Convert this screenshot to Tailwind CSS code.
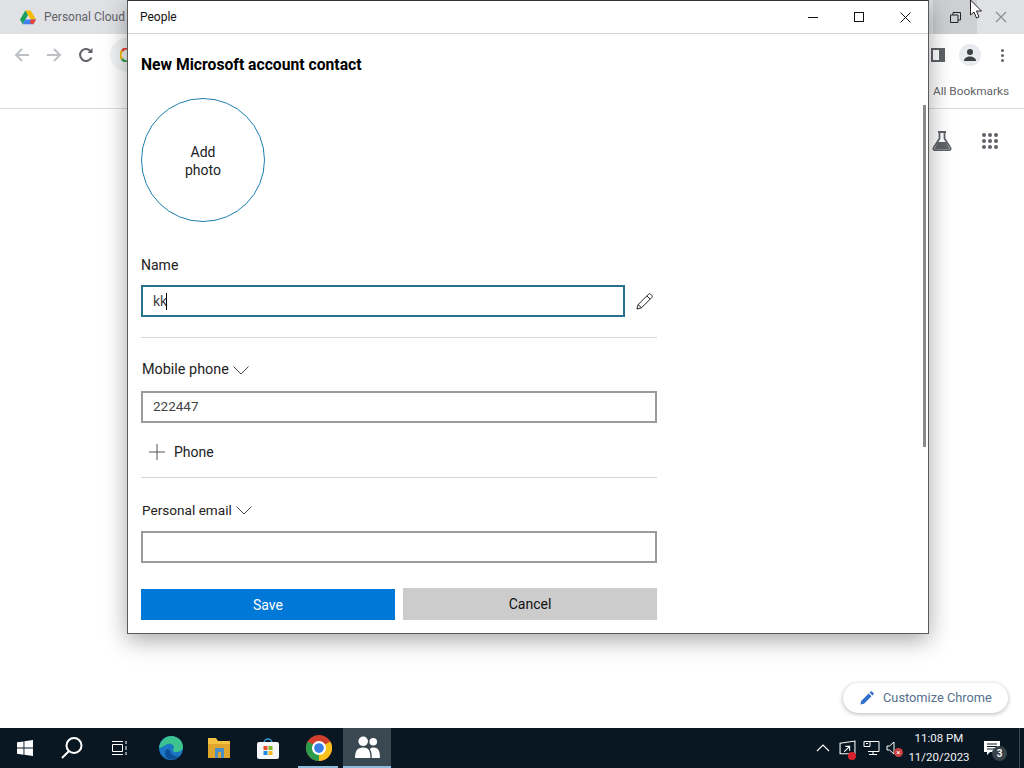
<!DOCTYPE html>
<html lang="en">
<head>
<meta charset="UTF-8">
<title>People</title>
<script src="https://cdn.jsdelivr.net/npm/@tailwindcss/browser@4"></script>
</head>
<body class="overflow-hidden bg-white">
<div class="relative w-[1024px] h-[768px] flex flex-col overflow-hidden font-['Roboto',sans-serif] text-[#222]">

  <!-- chrome behind the app window -->
  <div class="h-[34px] bg-[#dfe1e5] flex items-center shrink-0">
    <svg class="ml-[20px]" width="16" height="15" viewBox="0 0 16 15">
      <path d="M5.3 0.5h5.4L16 9.5h-5.3z" fill="#fbbc04"/>
      <path d="M5.3 0.5L0 9.5l2.7 4.8L8 5z" fill="#1a9f5c"/>
      <path d="M2.7 14.3h10.6L16 9.5H5.3z" fill="#3f7fee"/>
      <path d="M10.7 9.5H16l-2.7 4.8-3.5-1z" fill="#ea4335"/>
    </svg>
    <span class="ml-[8px] text-[12px] text-[#5f6368]">Personal Cloud</span>
    <div class="ml-auto flex items-center h-full">
      <div class="w-[44px] h-full bg-[#cdcfd2] flex items-center justify-center">
        <svg class="ml-[1px]" width="11" height="11" viewBox="0 0 11 11" fill="none" stroke="#222"><path d="M0.5 3h7.5v7.500h-7.500zM3 3v-2.500h7.500v7.500h-2.500"/></svg>
      </div>
      <div class="w-[47px] h-full flex items-center justify-center">
        <svg class="ml-[1px]" width="12" height="12" viewBox="0 0 12 12" fill="none" stroke="#8a8d91" stroke-width="1.2"><path d="M1 1l10 10M11 1l-10 10"/></svg>
      </div>
    </div>
  </div>
  <div class="relative h-[41px] flex items-center shrink-0 bg-white">
    <svg class="ml-[14px]" width="16" height="16" viewBox="0 0 16 16" fill="none" stroke="#bdc1c6" stroke-width="2"><path d="M15 8H2M8 2L2 8l6 6"/></svg>
    <svg class="ml-[16px]" width="16" height="16" viewBox="0 0 16 16" fill="none" stroke="#bdc1c6" stroke-width="2"><path d="M1 8h13M8 2l6 6-6 6"/></svg>
    <svg class="ml-[16px]" width="16" height="16" viewBox="0 0 16 16" fill="none" stroke="#5f6368" stroke-width="2"><path d="M13.500 10.500A6 6 0 1 1 13 4.500"/><path d="M14.500 1v5h-5" fill="#5f6368" stroke="none"/></svg>
    <div class="ml-[16px] w-[30px] h-[34px] rounded-l-full bg-[#f1f3f4] flex items-center pl-[10px]">
      <svg width="14" height="14" viewBox="0 0 14 14" fill="none" stroke-width="2.500"><path d="M12 3A6 6 0 0 0 2 3" stroke="#ea4335"/><path d="M2 3a6 6 0 0 0 0 8" stroke="#fbbc04"/><path d="M2 11a6 6 0 0 0 10 0" stroke="#34a853"/></svg>
    </div>
    <div class="ml-auto mr-[43px] flex items-center">
      <div class="w-[14px] h-[14px] border-[2px] border-[#5f6368] border-r-[6px]"></div>
      <div class="ml-[14px] w-[22px] h-[22px] rounded-full bg-[#e8eaed] flex items-center justify-center">
        <svg width="14" height="14" viewBox="0 0 14 14" fill="#3c4043"><circle cx="7" cy="4" r="3"/><path d="M1 13c0-3 3-4.500 6-4.500s6 1.500 6 4.500z"/></svg>
      </div>
    </div>
    <div class="absolute right-[20px] top-[15px] flex flex-col gap-[2px]">
      <div class="w-[3px] h-[3px] rounded-full bg-[#5f6368]"></div>
      <div class="w-[3px] h-[3px] rounded-full bg-[#5f6368]"></div>
      <div class="w-[3px] h-[3px] rounded-full bg-[#5f6368]"></div>
    </div>
  </div>
  <div class="h-[34px] border-b border-[#dadce0] flex items-center justify-end pr-[15px] shrink-0 text-[11.800px] text-[#5f6368]">All Bookmarks</div>

  <div class="flex-1 relative">
    <div class="absolute left-[931px] top-[21px] flex items-center gap-[29px]">
      <svg width="22" height="22" viewBox="0 0 22 22"><path d="M7 2h8M8.500 2v6.500L2.500 18a1.500 1.500 0 0 0 1.300 2.200h14.400A1.500 1.500 0 0 0 19.500 18L13.500 8.500V2" fill="none" stroke="#5f6368" stroke-width="1.800"/><path d="M7 12h8l3.500 7h-15z" fill="#5f6368"/></svg>
      <div class="grid grid-cols-3 gap-[2px]">
        <div class="w-[4px] h-[4px] rounded-full bg-[#5f6368]"></div><div class="w-[4px] h-[4px] rounded-full bg-[#5f6368]"></div><div class="w-[4px] h-[4px] rounded-full bg-[#5f6368]"></div>
        <div class="w-[4px] h-[4px] rounded-full bg-[#5f6368]"></div><div class="w-[4px] h-[4px] rounded-full bg-[#5f6368]"></div><div class="w-[4px] h-[4px] rounded-full bg-[#5f6368]"></div>
        <div class="w-[4px] h-[4px] rounded-full bg-[#5f6368]"></div><div class="w-[4px] h-[4px] rounded-full bg-[#5f6368]"></div><div class="w-[4px] h-[4px] rounded-full bg-[#5f6368]"></div>
      </div>
    </div>
    <div class="absolute left-[843px] top-[574px] w-[165px] h-[30px] rounded-full bg-white shadow-[0_1px_4px_rgba(0,0,0,0.3)] flex items-center pl-[17px] gap-[9px] text-[12.800px] text-[#56708f]">
      <svg width="14" height="14" viewBox="0 0 14 14" fill="#2f6fc9"><path d="M0.500 13.500l0.700-3.500 7.500-7.500 2.800 2.800-7.500 7.500zM9.600 1.600l1-1a1 1 0 0 1 1.400 0l1.400 1.400a1 1 0 0 1 0 1.400l-1 1z"/></svg>
      <span>Customize Chrome</span>
    </div>
  </div>

  <!-- taskbar -->
  <div class="h-[40px] bg-[#081722] flex items-center shrink-0 text-white">
    <div class="w-[48px] h-full flex items-center justify-center pl-[1px]">
      <svg width="16" height="16" viewBox="0 0 16 16" fill="#fff"><path d="M0 2.300l6.500-0.900v6.200H0zM7.400 1.300L16 0v7.600H7.400zM0 8.500h6.500v6.200L0 13.700zM7.400 8.500H16V16l-8.600-1.300z"/></svg>
    </div>
    <div class="w-[48px] h-full flex items-center justify-center">
      <svg width="24" height="24" viewBox="0 0 24 24" fill="none" stroke="#fff" stroke-width="2"><circle cx="14" cy="9.500" r="7.500"/><path d="M9 15l-7 7"/></svg>
    </div>
    <div class="w-[48px] h-full flex items-center justify-center">
      <svg width="18" height="16" viewBox="0 0 18 16" fill="none" stroke="#fff"><path d="M1.500 4.500h10v7h-10zM1 1.500h11M1 14.500h11M15 1v3M15 6v4M15 12v3"/></svg>
    </div>
    <div class="ml-[3px] w-[48px] h-full flex items-center justify-center">
      <svg width="26" height="26" viewBox="0 0 26 26">
        <circle cx="13" cy="13" r="12" fill="#1b77c4"/>
        <path d="M1 13C2 5 8 1 13 1c7 0 12 5 12 11 0 4-4 5-7 5-3 0-4-2-2-4 0-3-3-5-6-4-4 1-6 4-9 4z" fill="#3cc38f"/>
        <path d="M12 16c1 4 5 6 9 5-3 3-7 4-10 3-4-1-5-6-3-9 1-1 3-1 4 1z" fill="#0c4f96"/>
      </svg>
    </div>
    <div class="w-[48px] h-full flex items-center justify-center">
      <svg width="24" height="22" viewBox="0 0 24 22">
        <path d="M1 1h8l2 3h12v17H1z" fill="#f5c242"/>
        <path d="M1 7h22v14H1z" fill="#e0a52c"/>
        <path d="M8 11h9v10h-3v-6h-3v6H8z" fill="#4a90c9"/>
      </svg>
    </div>
    <div class="ml-[1px] w-[48px] h-full flex items-center justify-center">
      <svg width="24" height="24" viewBox="0 0 24 24">
        <path d="M8 7a4 4 0 0 1 8 0" fill="none" stroke="#39a0d8" stroke-width="1.500"/>
        <rect x="1" y="6" width="22" height="17" rx="2" fill="#f4f6f8"/>
        <rect x="7.500" y="10" width="4" height="4" fill="#e8532c"/><rect x="12.500" y="10" width="4" height="4" fill="#7cb929"/>
        <rect x="7.500" y="15" width="4" height="4" fill="#1f8fe0"/><rect x="12.500" y="15" width="4" height="4" fill="#f8b91c"/>
      </svg>
    </div>
    <div class="relative ml-[2px] w-[49px] h-full flex items-center justify-center">
      <svg width="26" height="26" viewBox="0 0 24 24">
        <circle cx="12" cy="12" r="12" fill="#d33f2f"/>
        <path d="M12 12L22.400 6A12 12 0 0 1 12 24z" fill="#f7c21b"/>
        <path d="M12 12L12 24A12 12 0 0 1 1.600 6z" fill="#2c9c4b"/>
        <circle cx="12" cy="12" r="5.500" fill="#3b7fe6" stroke="#fff" stroke-width="2"/>
      </svg>
      <div class="absolute bottom-0 left-[4px] w-[40px] h-[2px] bg-[#8fbbdc]"></div>
    </div>
    <div class="w-[48px] h-full flex items-center justify-center bg-[#3a4852] border-b-[2px] border-[#8fbbdc]">
      <svg width="27" height="23" viewBox="0 0 28 24" fill="#fff">
        <circle cx="9.500" cy="5.500" r="5"/><circle cx="20" cy="6" r="4"/>
        <path d="M1 23c0-7 2-11 8.500-11S17 17 17 23z"/><path d="M18.500 23c0-4-0.500-7-2-9 1-2 2.500-2 4-2 5 0 6.500 4 6.500 11z"/>
      </svg>
    </div>
    <div class="ml-auto flex items-center h-full">
      <svg width="14" height="8" viewBox="0 0 14 8" fill="none" stroke="#fff" stroke-width="1.200"><path d="M1 7l6-6 6 6"/></svg>
      <div class="relative ml-[9px]">
        <svg class="block" width="17" height="17" viewBox="0 0 16 16" fill="none" stroke="#fff"><path d="M1 3l14-2v12H1zM5 11l5-5M10 10V6H6"/></svg>
        <div class="absolute right-0 bottom-[-3px] w-[8px] h-[8px] rounded-full bg-[#d8232f]"></div>
      </div>
      <svg class="ml-[7px]" width="17" height="16" viewBox="0 0 17 16" fill="none" stroke="#fff"><path d="M5 1.500h11v10H5M1 1.500h6v5H1zM3 3.500h2M10 11.500v3M6 14.500h8"/></svg>
      <div class="relative ml-[6px] w-[14px]">
        <svg class="block" width="10" height="14" viewBox="0 0 10 14" fill="none" stroke="#fff"><path d="M1 5h2.500L8 1v12L3.500 9H1z"/></svg>
        <div class="absolute right-[-3px] bottom-[-2px] w-[9px] h-[9px] rounded-full bg-[#c94040] text-[8px] leading-[9px] text-center">×</div>
      </div>
      <div class="ml-[7px] w-[64px] text-center text-[11.500px] leading-[19px] text-[#f2f2f2]">
        <div>11:08 PM</div>
        <div>11/20/2023</div>
      </div>
      <div class="relative ml-[13px] mr-[19px] w-[16px] h-[15px]">
        <svg class="block" width="16" height="15" viewBox="0 0 16 15"><path d="M0 0h16v11H6l-3 3v-3H0z" fill="#fff"/><path d="M3 3h10M3 5.500h10M3 8h7" stroke="#081722"/></svg>
        <div class="absolute left-[8px] top-[5px] w-[15px] h-[15px] rounded-full bg-[#38424a] text-[10px] leading-[15px] text-center font-semibold">3</div>
      </div>
      <div class="mr-[4px] w-px h-full bg-[#3a4852]"></div>
    </div>
  </div>

  <!-- People app window, floating over the browser -->
  <div class="absolute left-[127px] top-0 w-[802px] h-[634px] bg-white border border-[#5a5a5a] border-t-[#333] shadow-[0_6px_22px_rgba(0,0,0,0.35)] flex flex-col">
    <div class="h-[33px] flex items-center border-b border-[#d4d4d4] shrink-0 text-[#111]">
      <span class="ml-[12px] text-[12px]">People</span>
      <div class="ml-auto flex items-center">
        <div class="w-[46px] flex justify-center"><div class="w-[10px] h-px bg-[#111]"></div></div>
        <div class="w-[46px] flex justify-center"><div class="w-[10px] h-[10px] border border-[#111]"></div></div>
        <div class="w-[46px] flex justify-center">
          <svg width="11" height="11" viewBox="0 0 11 11" stroke="#111"><path d="M0.500 0.500l10 10M10.500 0.500l-10 10"/></svg>
        </div>
      </div>
    </div>
    <div class="relative flex-1 pl-[13px] pt-[21px]">
      <div class="absolute right-[2px] top-[71px] w-[3px] h-[342px] bg-[#8a8a8a]"></div>
      <h1 class="text-[15.700px] leading-[20px] font-bold text-black">New Microsoft account contact</h1>
      <div class="mt-[23px] w-[124px] h-[124px] rounded-full border border-[#1d7fb0] pt-[2px] flex items-center justify-center text-center text-[14px] leading-[18px]">Add<br>photo</div>
      <div class="mt-[33px] text-[14px] leading-[20px]">Name</div>
      <div class="mt-[10px] flex items-center">
        <div class="w-[484px] h-[32px] border-[2px] border-[#28728f] pl-[10px] flex items-center text-[14px] text-[#444]">kk<span class="w-px h-[17px] bg-black ml-[-1px]"></span></div>
        <svg class="ml-[11px]" width="17" height="17" viewBox="0 0 17 17" fill="none" stroke="#222"><path d="M1 16l1.200-4.500L12.500 1.200a1.500 1.500 0 0 1 2.100 0l1.200 1.200a1.500 1.500 0 0 1 0 2.100L5.500 14.800zM2.200 11.500l3.300 3.300M11 3l3 3"/></svg>
      </div>
      <div class="mt-[20px] w-[516px] h-px bg-[#d6d6d6]"></div>
      <div class="mt-[22px] flex items-center text-[14.400px] leading-[20px]">
        <span class="ml-px">Mobile phone</span>
        <svg class="ml-[4px]" width="16" height="9" viewBox="0 0 16 9" fill="none" stroke="#444"><path d="M0.500 0.500L8 8l7.500-7.500"/></svg>
      </div>
      <div class="mt-[11px] w-[516px] h-[32px] border-[2px] border-[#9b9b9b] pl-[10px] pb-[2px] flex items-center text-[13.500px] text-[#444]">222447</div>
      <div class="mt-[19px] ml-[8px] flex items-center text-[14px] leading-[20px]">
        <svg width="16" height="16" viewBox="0 0 16 16" stroke="#555"><path d="M0 8h16M8 0v16"/></svg>
        <span class="ml-[9px]">Phone</span>
      </div>
      <div class="mt-[15px] w-[516px] h-px bg-[#d6d6d6]"></div>
      <div class="mt-[22px] flex items-center text-[13.600px] leading-[20px]">
        <span class="ml-px">Personal email</span>
        <svg class="ml-[4px]" width="16" height="9" viewBox="0 0 16 9" fill="none" stroke="#444"><path d="M0.500 0.500L8 8l7.500-7.500"/></svg>
      </div>
      <div class="mt-[11px] w-[516px] h-[32px] border-[2px] border-[#9b9b9b]"></div>
      <div class="mt-[25px] w-[516px] flex items-end gap-[8px] text-[14px]">
        <button class="w-[254px] h-[31px] pt-[1px] bg-[#0078d7] text-white">Save</button>
        <button class="w-[254px] h-[32px] bg-[#cccccc] text-[#111]">Cancel</button>
      </div>
    </div>
  </div>

  <!-- mouse pointer -->
  <svg class="absolute left-[970px] top-0" width="13" height="19" viewBox="0 0 13 19"><path d="M0.500 0v15l3.500-3 2.500 6 2.500-1-2.500-6h5z" fill="#fff" stroke="#222"/></svg>
</div>
</body>
</html>
